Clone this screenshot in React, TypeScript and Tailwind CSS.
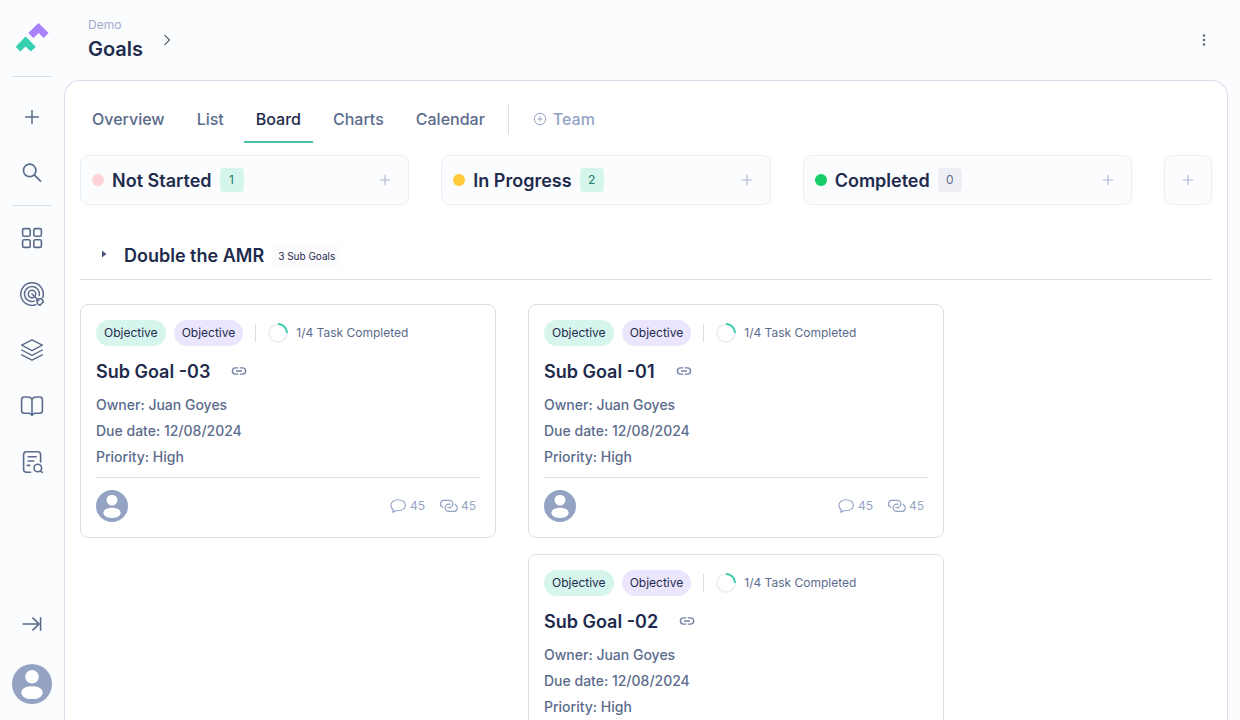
import type { ReactNode } from "react";

type IconProps = { className?: string };

function Plus({ className = "" }: IconProps) {
  return (
    <svg viewBox="0 0 16 16" fill="none" stroke="currentColor" className={className} aria-hidden="true">
      <path d="M8 1v14M1 8h14" strokeWidth="1.5" />
    </svg>
  );
}

function Logo() {
  return (
    <svg viewBox="0 0 34 30" className="h-[30px] w-[34px]" aria-hidden="true">
      <path d="M23.5 0 33.6 10.1 28.7 15 23.7 10 18.4 15 13.3 10.1Z" fill="#a881fb" />
      <path d="M10.6 13.6 20.8 23.7 15.8 28.5 10.6 23.6 5.4 28.5 0.6 23.7Z" fill="#36cfb0" />
    </svg>
  );
}

function Search() {
  return (
    <svg viewBox="0 0 24 24" fill="none" stroke="currentColor" strokeWidth="1.7" className="size-6" aria-hidden="true">
      <circle cx="9.7" cy="9.4" r="6.2" />
      <path d="m14.2 13.9 6.800 6.800" />
    </svg>
  );
}

function GridIcon() {
  return (
    <svg viewBox="0 0 24 24" fill="none" stroke="currentColor" strokeWidth="1.6" className="size-6" aria-hidden="true">
      <rect x="2.6" y="2.6" width="7.6" height="7.6" rx="1.5" />
      <rect x="13.8" y="2.6" width="7.6" height="7.6" rx="1.5" />
      <rect x="2.6" y="13.8" width="7.6" height="7.6" rx="1.5" />
      <rect x="13.8" y="13.8" width="7.6" height="7.6" rx="1.5" />
    </svg>
  );
}

function Target() {
  return (
    <svg viewBox="0 0 24 24" fill="none" stroke="currentColor" strokeWidth="1.5" strokeLinecap="round" strokeLinejoin="round" className="size-6" aria-hidden="true">
      <path d="M15.800 22.700A11.300 11.300 0 1 1 22.900 15.200" />
      <path d="M14.400 19.100A7.500 7.500 0 1 1 19.300 13.600" />
      <circle cx="12" cy="12" r="3.700" />
      <path d="m12 12 6.800 6.800" />
      <path d="M16.600 17.200 21.400 16.500 23.400 19.800 19.800 23.400 17.400 21.500Z" />
    </svg>
  );
}

function Layers() {
  return (
    <svg viewBox="0 0 24 24" fill="none" stroke="currentColor" strokeWidth="1.4" strokeLinecap="round" strokeLinejoin="round" className="size-6" aria-hidden="true">
      <path d="M12 1.8 22.3 7.2 12 12.6 1.7 7.2Z" />
      <path d="M1.7 12 12 17.4 22.3 12" />
      <path d="M1.7 16.8 12 22.2l10.3-5.4" />
    </svg>
  );
}

function Book() {
  return (
    <svg viewBox="0 0 24 24" fill="none" stroke="currentColor" strokeWidth="1.6" strokeLinejoin="round" className="size-6" aria-hidden="true">
      <path d="M12 5C11 3.6 9.6 3 7.8 3H4.200C2.600 3 1.600 4 1.600 5.600V16.800C1.600 18.400 2.600 19.200 4.200 19.200H8.600C10.300 19.200 11.400 19.800 12 21.400 12.600 19.800 13.700 19.200 15.400 19.200H19.800C21.400 19.200 22.400 18.400 22.400 16.800V5.600C22.400 4 21.400 3 19.800 3H16.200C14.400 3 13 3.600 12 5Z" />
      <path d="M12 5v16" />
    </svg>
  );
}

function DocSearch() {
  return (
    <svg viewBox="0 0 24 24" fill="none" stroke="currentColor" strokeWidth="1.6" strokeLinecap="round" strokeLinejoin="round" className="size-6" aria-hidden="true">
      <path d="M10.500 22.200H6.600A3 3 0 0 1 3.600 19.200V4.800A3 3 0 0 1 6.600 1.800H17.600A3 3 0 0 1 20.600 4.800V12" />
      <path d="M8.200 6.800h8M8.200 11h5.500M7.300 15.400h2.500" />
      <circle cx="17.800" cy="18" r="3.800" />
      <path d="m20.600 20.800 1.600 1.600" />
    </svg>
  );
}

function Collapse() {
  return (
    <svg viewBox="0 0 24 24" fill="none" stroke="currentColor" strokeWidth="1.6" className="size-6" aria-hidden="true">
      <path d="M2.700 12h16.500M12.500 5.600l6.500 6.400-6.500 6.400M20.600 5.200v13.600" />
    </svg>
  );
}

function Avatar({ className = "" }: IconProps) {
  return (
    <svg viewBox="0 0 40 40" className={className} role="img" aria-label="Juan Goyes">
      <circle cx="20" cy="20" r="20" fill="#94a3c4" />
      <circle cx="20" cy="12.700" r="6.800" fill="#fff" />
      <rect x="9.200" y="22.200" width="21.600" height="12.800" rx="9.500" ry="6.400" fill="#fff" />
    </svg>
  );
}

function LinkIcon() {
  return (
    <svg viewBox="0 0 16 16" fill="none" stroke="currentColor" strokeWidth="1.4" className="size-4" aria-hidden="true">
      <path d="M7.200 3.900H4.500a3.100 3.100 0 0 0 0 6.200h2.700M8.800 3.900h2.700a3.100 3.100 0 0 1 0 6.200H8.800M5 7h6" />
    </svg>
  );
}

function Comment() {
  return (
    <svg viewBox="0 0 16 16" fill="none" stroke="currentColor" strokeWidth="1.100" strokeLinejoin="round" className="size-4" aria-hidden="true">
      <path d="M8.200 1.700c4 0 7.200 2.400 7.200 5.500s-3.200 5.600-7.200 5.600c-.9 0-1.800-.1-2.600-.4-.8.900-1.900 1.700-3.100 1.800.6-.9.800-1.800.5-2.700C1.800 10.500.900 9 .900 7.200c0-3.100 3.300-5.500 7.300-5.500Z" />
    </svg>
  );
}

function Chain() {
  return (
    <svg viewBox="0 0 20 14" fill="none" stroke="currentColor" strokeWidth="1.200" strokeLinecap="round" className="h-3.5 w-5" aria-hidden="true">
      <path d="M3.800 8.400A3.700 3.700 0 0 1 4.200 1.400H10.200A3.600 3.600 0 0 1 10.200 8.600H8.800" />
      <path d="M16.200 5.600A3.700 3.700 0 0 1 15.800 12.400H9.800A3.600 3.600 0 0 1 9.800 5.200H11.200" />
    </svg>
  );
}

function ProgressRing() {
  return (
    <svg viewBox="0 0 20 20" fill="none" strokeWidth="2" className="size-5" aria-hidden="true">
      <circle cx="10" cy="10" r="9" stroke="#eef0f5" />
      <path d="M10 1a9 9 0 0 1 9 9" stroke="#36cba9" />
    </svg>
  );
}

function NavButton({ label, children }: { label: string; children: ReactNode }) {
  return (
    <button type="button" aria-label={label} className="flex size-8 items-center justify-center">
      {children}
    </button>
  );
}

function Sidebar() {
  return (
    <nav aria-label="Main" className="flex w-16 shrink-0 flex-col items-center px-3 pb-4 text-[#5b6b8c]">
      <a href="#" aria-label="Home" className="flex h-[76px] items-center">
        <Logo />
      </a>
      <div className="flex w-full flex-col items-center gap-6 border-y border-[#dbdfe8] pt-6 pb-4">
        <NavButton label="Create"><Plus className="size-4" /></NavButton>
        <NavButton label="Search"><Search /></NavButton>
      </div>
      <div className="flex flex-1 flex-col items-center gap-6 pt-4">
        <NavButton label="Dashboard"><GridIcon /></NavButton>
        <NavButton label="Goals"><Target /></NavButton>
        <NavButton label="Projects"><Layers /></NavButton>
        <NavButton label="Library"><Book /></NavButton>
        <NavButton label="Reports"><DocSearch /></NavButton>
      </div>
      <NavButton label="Expand sidebar"><Collapse /></NavButton>
      <button type="button" aria-label="Account" className="mt-6">
        <Avatar className="size-10" />
      </button>
    </nav>
  );
}

const tabs = ["Overview", "List", "Board", "Charts", "Calendar"];

function Tabs() {
  return (
    <div className="flex items-start text-base font-medium">
      <div className="flex gap-2">
        {tabs.map((tab) => (
          <a
            key={tab}
            href="#"
            aria-current={tab === "Board" ? "page" : undefined}
            className={
              tab === "Board"
                ? "border-b-2 border-[#4dbfaa] px-3 pt-3 pb-2.5 text-[#1e2b4d]"
                : "border-b-2 border-transparent px-3 pt-3 pb-2.5 text-[#5b6b8c]"
            }
          >
            {tab}
          </a>
        ))}
      </div>
      <div className="mt-[9px] ml-[11px] h-[30px] w-px bg-[#dbdfe8]" />
      <button type="button" className="ml-6 flex items-center gap-1.5 pt-3 text-[#94a3c4]">
        <svg viewBox="0 0 14 14" fill="none" stroke="currentColor" className="size-3.5" aria-hidden="true">
          <circle cx="7" cy="7" r="5.700" />
          <path d="M7 4.500v5M4.500 7h5" />
        </svg>
        Team
      </button>
    </div>
  );
}

const columns = [
  { name: "Not Started", count: 1, dot: "bg-[#fdd3d5]", badge: "bg-[#d5f5ed] text-[#21806a]" },
  { name: "In Progress", count: 2, dot: "bg-[#ffc93a]", badge: "bg-[#d5f5ed] text-[#21806a]" },
  { name: "Completed", count: 0, dot: "bg-[#16cd66]", badge: "bg-[#edeff5] text-[#5b6b8c]" },
];

function ColumnHeaders() {
  return (
    <div className="mt-3 grid grid-cols-[1fr_1fr_1fr_48px] gap-8">
      {columns.map((c) => (
        <div key={c.name} className="flex h-[50px] items-center rounded-lg border border-[#ebeff5] bg-[#fafcfe] pr-[15px] pl-[11px]">
          <span className={`size-3 rounded-full ${c.dot}`} />
          <h2 className="ml-2 pt-0.5 text-lg font-semibold text-[#1e2b4d]">{c.name}</h2>
          <span className={`ml-2 flex size-6 items-center justify-center rounded text-xs ${c.badge}`}>{c.count}</span>
          <button type="button" aria-label={`Add to ${c.name}`} className="ml-auto p-0.5 text-[#b0b6cf]">
            <Plus className="size-3" />
          </button>
        </div>
      ))}
      <button type="button" aria-label="Add column" className="flex items-center justify-center rounded-lg border border-[#ebeff5] bg-[#fafcfe] text-[#b0b6cf]">
        <Plus className="size-3" />
      </button>
    </div>
  );
}

function GoalCard({ title }: { title: string }) {
  return (
    <article className="rounded-lg border border-[#dbdfe8] bg-white p-[15px]">
      <div className="flex h-[26px] items-center text-xs">
        <span className="flex h-full items-center rounded-full bg-[#d5f5ed] px-2 text-[#1e2b4d]">Objective</span>
        <span className="ml-2 flex h-full items-center rounded-full bg-[#ebe5fd] px-2 text-[#1e2b4d]">Objective</span>
        <span className="mx-3 h-[18px] w-px bg-[#dbdfe8]" />
        <ProgressRing />
        <span className="ml-2 text-[#5b6b8c]">1/4 Task Completed</span>
      </div>
      <div className="mt-3 flex items-center">
        <h3 className="text-lg font-semibold text-[#1e2b4d]">{title}</h3>
        <button type="button" aria-label={`Copy link to ${title}`} className="ml-[21px] text-[#7583a5]">
          <LinkIcon />
        </button>
      </div>
      <div className="mt-1.5 text-sm leading-[26px] font-medium text-[#5b6b8c]">
        <p>Owner: Juan Goyes</p>
        <p>Due date: 12/08/2024</p>
        <p>Priority: High</p>
      </div>
      <div className="mt-[7px] flex items-center border-t border-[#dbdfe8] pt-3 pr-1 text-xs text-[#94a3c4]">
        <Avatar className="size-8" />
        <span className="ml-auto flex items-center gap-1"><Comment />45</span>
        <span className="ml-3.5 flex items-center gap-0.5"><Chain />45</span>
      </div>
    </article>
  );
}

export default function App() {
  return (
    <div className="flex h-screen overflow-hidden bg-[#fafcfe] font-[Inter,sans-serif]">
      <Sidebar />
      <div className="flex min-w-0 flex-1 flex-col pr-3">
        <header className="flex h-20 shrink-0 items-center pr-4 pl-6">
          <div>
            <p className="text-xs leading-4 text-[#a3a9cc]">Demo</p>
            <h1 className="mt-0.5 text-xl leading-7 font-semibold text-[#1e2b4d]">Goals</h1>
          </div>
          <svg viewBox="0 0 8 12" fill="none" stroke="#5b6175" className="ml-5 h-3 w-2" aria-hidden="true">
            <path d="m1.500 1 5 5-5 5" strokeWidth="1.200" />
          </svg>
          <button type="button" aria-label="More options" className="ml-auto text-[#5b6175]">
            <svg viewBox="0 0 16 16" fill="currentColor" className="size-4" aria-hidden="true">
              <circle cx="8" cy="3.500" r="1.200" />
              <circle cx="8" cy="8" r="1.200" />
              <circle cx="8" cy="12.500" r="1.200" />
            </svg>
          </button>
        </header>
        <main className="min-h-0 flex-1 overflow-hidden rounded-t-2xl border border-b-0 border-[#d9ddea] bg-white px-[15px] pt-3.5">
          <Tabs />
          <ColumnHeaders />
          <section>
            <div className="mt-[27px] flex h-12 items-center border-b border-[#dbdfe8] pl-5">
              <button type="button" aria-label="Toggle Double the AMR" className="px-0.5 pb-1 text-[#4a587a]">
                <svg viewBox="0 0 6 8" fill="currentColor" className="h-2 w-1.5" aria-hidden="true">
                  <path d="M0 .500v7L4.500 4Z" />
                </svg>
              </button>
              <h2 className="ml-3.5 text-lg font-semibold text-[#1e2b4d]">Double the AMR</h2>
              <span className="ml-2 rounded bg-[#fcfcfe] px-1.5 py-1 text-[10px] leading-4 text-[#1e2b4d]">3 Sub Goals</span>
            </div>
            <div className="mt-6 flex items-start gap-8">
              <div className="w-[416px] shrink-0">
                <GoalCard title="Sub Goal -03" />
              </div>
              <div className="flex w-[416px] shrink-0 flex-col gap-4">
                <GoalCard title="Sub Goal -01" />
                <GoalCard title="Sub Goal -02" />
              </div>
            </div>
          </section>
        </main>
      </div>
    </div>
  );
}
